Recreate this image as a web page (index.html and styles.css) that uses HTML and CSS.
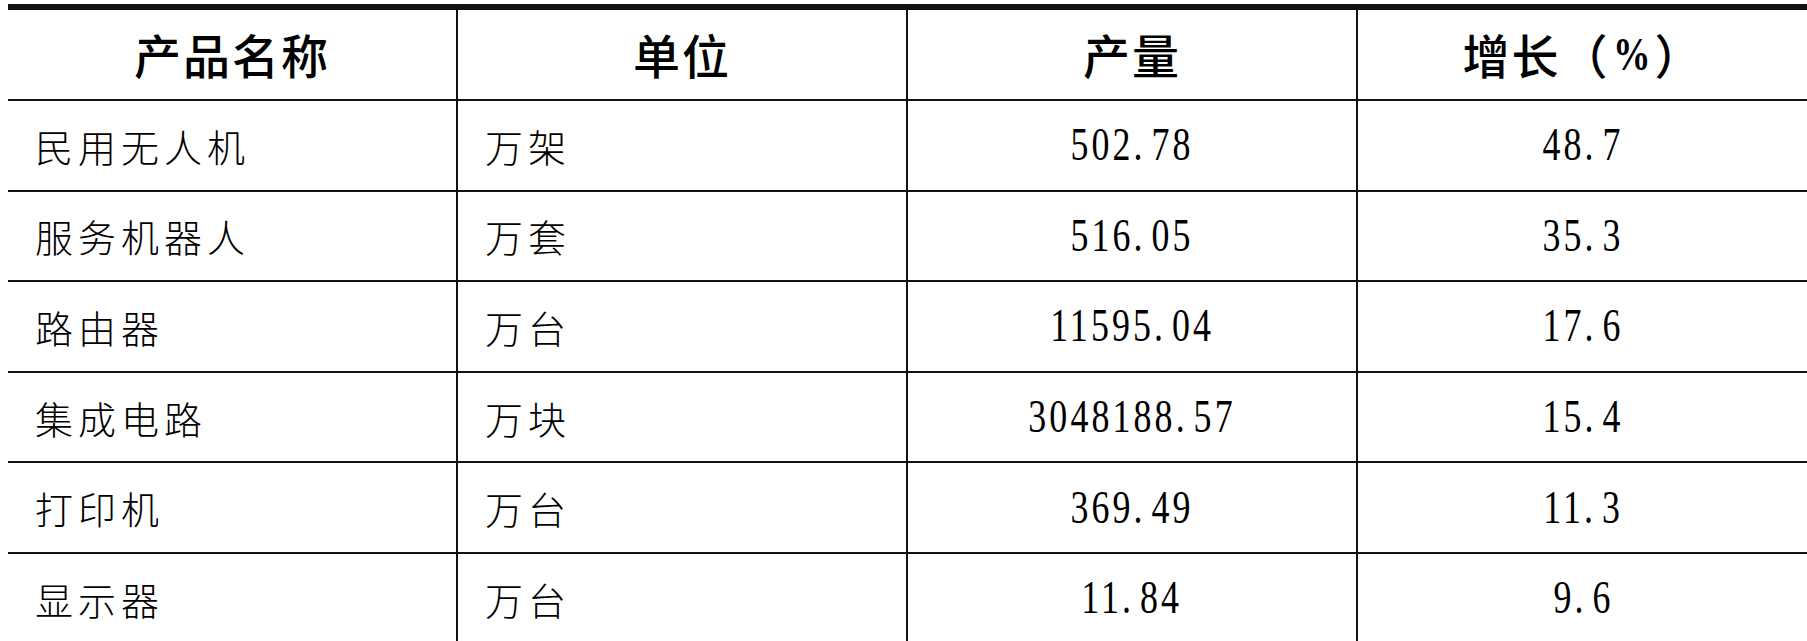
FILE: index.html
```html
<!DOCTYPE html>
<html lang="zh-CN">
<head>
<meta charset="utf-8">
<title>产品产量</title>
<link rel="stylesheet" href="styles.css">
</head>
<body>
<div class="table">
  <div class="cell head">产品名称</div>
  <div class="cell head">单位</div>
  <div class="cell head">产量</div>
  <div class="cell head last">增长（<span class="pct">%</span>）</div>

  <div class="cell name">民用无人机</div>
  <div class="cell name">万架</div>
  <div class="cell num"><span class="n">502<span class="dot">.</span>78</span></div>
  <div class="cell num last"><span class="n">48<span class="dot">.</span>7</span></div>

  <div class="cell name">服务机器人</div>
  <div class="cell name">万套</div>
  <div class="cell num"><span class="n">516<span class="dot">.</span>05</span></div>
  <div class="cell num last"><span class="n">35<span class="dot">.</span>3</span></div>

  <div class="cell name">路由器</div>
  <div class="cell name">万台</div>
  <div class="cell num"><span class="n">11595<span class="dot">.</span>04</span></div>
  <div class="cell num last"><span class="n">17<span class="dot">.</span>6</span></div>

  <div class="cell name">集成电路</div>
  <div class="cell name">万块</div>
  <div class="cell num"><span class="n">3048188<span class="dot">.</span>57</span></div>
  <div class="cell num last"><span class="n">15<span class="dot">.</span>4</span></div>

  <div class="cell name">打印机</div>
  <div class="cell name">万台</div>
  <div class="cell num"><span class="n">369<span class="dot">.</span>49</span></div>
  <div class="cell num last"><span class="n">11<span class="dot">.</span>3</span></div>

  <div class="cell name">显示器</div>
  <div class="cell name">万台</div>
  <div class="cell num"><span class="n">11<span class="dot">.</span>84</span></div>
  <div class="cell num last"><span class="n">9<span class="dot">.</span>6</span></div>
</div>
</body>
</html>
```
FILE: styles.css
```css
html, body {
  background: #ffffff;
}
body {
  margin: 4px 0 0 8px;
  overflow: hidden;
  color: #000;
  font-family: "Noto Sans CJK SC", "Noto Sans", sans-serif;
}
.table {
  width: 1800px;
  display: grid;
  grid-template-columns: 450px 450px 450px 450px;
  grid-template-rows: 91px repeat(6, 90.6px);
  border-top: 6px solid #111;
}
.cell {
  box-sizing: border-box;
  border-bottom: 2px solid #111;
  border-right: 2px solid #111;
  display: flex;
  align-items: center;
}
.cell.last {
  border-right: none;
}
.head {
  justify-content: center;
  font-size: 47px;
  font-weight: 500;
  letter-spacing: 2px;
  padding-bottom: 2px;
}
.pct {
  font-family: "Liberation Serif", "Times New Roman", serif;
  font-weight: 700;
  display: inline-block;
  transform: scaleX(0.8);
  margin: 0 -2px;
}
.name {
  padding-left: 27px;
  font-size: 38px;
  font-weight: 300;
  letter-spacing: 5px;
}
.num {
  justify-content: center;
}
.n {
  display: inline-block;
  font-family: "Liberation Serif", "Times New Roman", serif;
  font-size: 46px;
  letter-spacing: 4px;
  transform: scaleX(0.78);
  line-height: 1;
}
.dot {
  display: inline-block;
  width: 0.5em;
}
```
